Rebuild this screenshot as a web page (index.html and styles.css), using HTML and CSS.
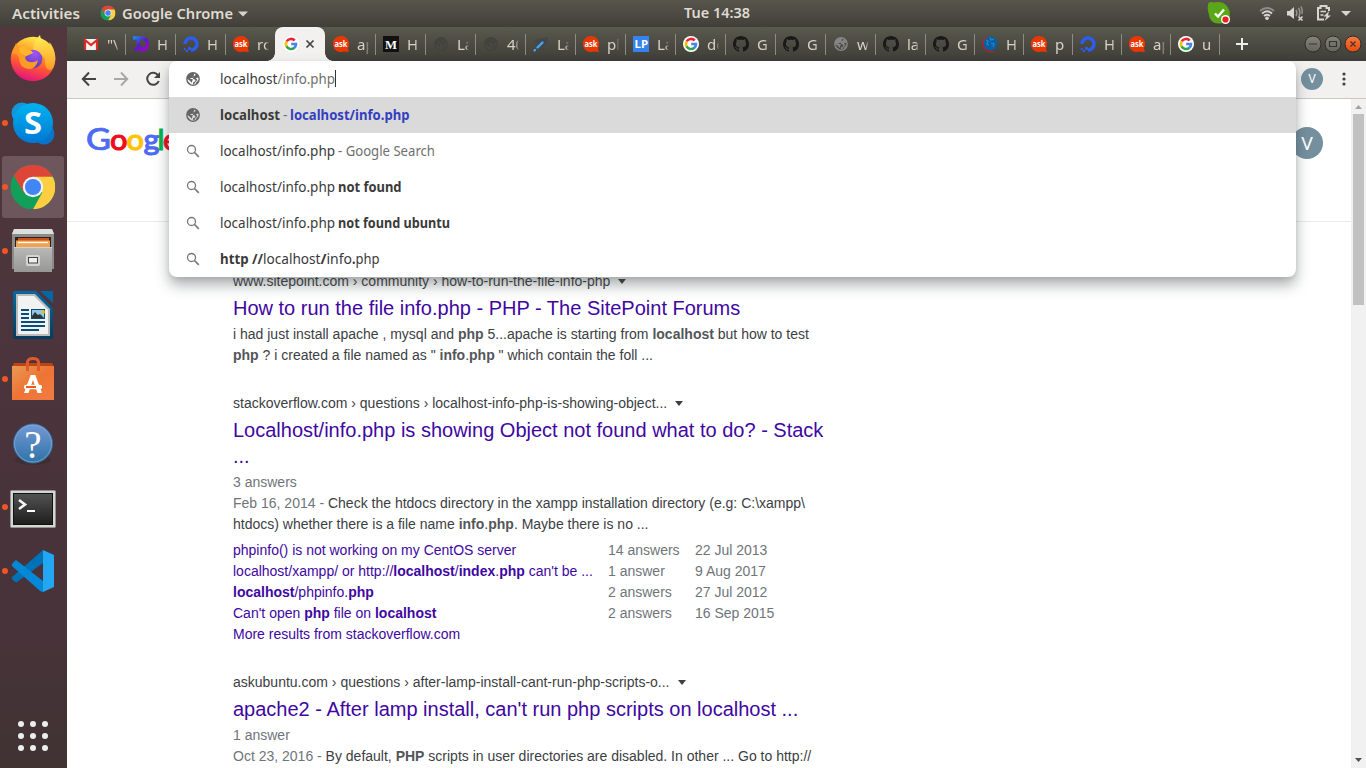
FILE: index.html
```html
<!DOCTYPE html>
<html lang="en">
<head>
<meta charset="utf-8">
<title>localhost/info.php - Google Search</title>
<link rel="stylesheet" href="styles.css">
</head>
<body>
<svg class="defs" width="0" height="0">
  <defs>
    <linearGradient id="gSky" x1="0" y1="0" x2="0" y2="1"><stop offset="0" stop-color="#00b4f0"/><stop offset="1" stop-color="#0078d4"/></linearGradient>
    <linearGradient id="gFox" x1=".7" y1="0" x2=".4" y2="1"><stop offset="0" stop-color="#fff44f"/><stop offset=".35" stop-color="#ffa52a"/><stop offset=".65" stop-color="#ff5634"/><stop offset="1" stop-color="#e3127e"/></linearGradient>
    <linearGradient id="gFox2" x1="0" y1="0" x2="0" y2="1"><stop offset="0" stop-color="#fff056"/><stop offset="1" stop-color="#ff9a26"/></linearGradient>
    <radialGradient id="gPur" cx=".6" cy=".2" r=".8"><stop offset="0" stop-color="#a252ff"/><stop offset="1" stop-color="#5b3fae"/></radialGradient>
    <linearGradient id="gGrey" x1="0" y1="0" x2="0" y2="1"><stop offset="0" stop-color="#b9b9b7"/><stop offset="1" stop-color="#979795"/></linearGradient>
    <linearGradient id="gWr" x1="0" y1="0" x2="0" y2="1"><stop offset="0" stop-color="#0369a3"/><stop offset="1" stop-color="#063b5c"/></linearGradient>
    <linearGradient id="gBag" x1="0" y1="0" x2="1" y2="1"><stop offset="0" stop-color="#e79a55"/><stop offset=".5" stop-color="#ee7434"/><stop offset="1" stop-color="#f07c44"/></linearGradient>
    <linearGradient id="gHelp" x1="0" y1="0" x2="0" y2="1"><stop offset="0" stop-color="#7399d6"/><stop offset="1" stop-color="#2f72a6"/></linearGradient>
    <linearGradient id="gTerm" x1="0" y1="0" x2="0" y2="1"><stop offset="0" stop-color="#535353"/><stop offset="1" stop-color="#1d1d1d"/></linearGradient>
    <linearGradient id="gJd" x1="0" y1="0" x2="1" y2="1"><stop offset="0" stop-color="#1a86ff"/><stop offset=".5" stop-color="#5a1bc4"/><stop offset="1" stop-color="#a800d0"/></linearGradient>
    <linearGradient id="gBtn" x1="0" y1="0" x2="0" y2="1"><stop offset="0" stop-color="#85847b"/><stop offset="1" stop-color="#65645c"/></linearGradient>
    <linearGradient id="gCls" x1="0" y1="0" x2="0" y2="1"><stop offset="0" stop-color="#f67a45"/><stop offset="1" stop-color="#ea4a08"/></linearGradient>
  </defs>
  <symbol id="chrome" viewBox="0 0 48 48">
    <circle cx="24" cy="24" r="24" fill="#129f5a"/>
    <path d="M24 24 3.2 12A24 24 0 0 1 44.800 12Z" fill="#dd4538"/>
    <path d="M24 13H45.300A24 24 0 0 1 24 48L34 30Z" fill="#ffce41"/>
    <path d="M3.200 12 14 31 24 24V13Z" fill="#dd4538"/>
    <path d="M3.200 12 14 30 27 35 24 48A24 24 0 0 1 3.200 12Z" fill="#129f5a"/>
    <circle cx="24" cy="24" r="11" fill="#f1f1f1"/><circle cx="24" cy="24" r="8.700" fill="#4285f4"/>
  </symbol>
  <symbol id="goog" viewBox="0 0 16 16">
    <circle cx="8" cy="8" r="8" fill="#fff"/>
    <g fill="none" stroke-width="2.600">
      <path d="M3.700 5.400A5 5 0 0 1 11.700 4.500" stroke="#ea2533"/>
      <path d="M3.700 5.400A5 5 0 0 0 3.700 10.600" stroke="#fbbc05"/>
      <path d="M3.600 10.400A5 5 0 0 0 11.400 11.700" stroke="#2aa64f"/>
      <path d="M8.200 8H13A5 5 0 0 1 11.300 11.800" stroke="#4285f4"/>
    </g>
  </symbol>
  <symbol id="ask" viewBox="0 0 16 16"><path d="M8 0A8 8 0 1 0 10.500 15.500L15.800 16 15 12A8 8 0 0 0 8 0Z" fill="#ea3700"/><text x="1.500" y="11" class="ask-t" textLength="13" lengthAdjust="spacingAndGlyphs">ask</text></symbol>
  <symbol id="gh" viewBox="0 0 16 16"><path fill="#191919" d="M8 0C3.580 0 0 3.580 0 8c0 3.540 2.290 6.530 5.470 7.590.4.070.55-.17.55-.38 0-.19-.01-.82-.01-1.490-2.010.37-2.530-.49-2.690-.94-.09-.23-.48-.94-.82-1.130-.28-.15-.68-.52-.01-.53.63-.01 1.080.58 1.230.82.72 1.210 1.870.87 2.330.66.070-.52.28-.87.51-1.070-1.780-.2-3.640-.89-3.640-3.950 0-.87.31-1.590.82-2.150-.08-.2-.36-1.020.08-2.120 0 0 .67-.21 2.200.82.64-.18 1.320-.27 2-.27s1.360.09 2 .27c1.530-1.040 2.200-.82 2.200-.82.44 1.100.16 1.920.08 2.120.51.56.82 1.270.82 2.150 0 3.070-1.870 3.750-3.650 3.950.29.25.54.73.54 1.480 0 1.070-.01 1.930-.01 2.200 0 .21.15.46.55.38A8.010 8.010 0 0 0 16 8c0-4.420-3.580-8-8-8Z"/></symbol>
  <symbol id="globe" viewBox="0 0 16 16"><circle cx="8" cy="8" r="6.900" fill="currentColor"/><path class="land" d="M9.200 2.700 10.500 3.200 10.200 4.400 8.600 5V6.300L7.400 7H5.500V8H9L10.300 9.200V10.300L8.200 11.200 7.800 13.300 6.600 13.200V11.500L5.300 10.300 2.600 8A5.500 5.500 0 0 0 3.200 10.600L5.600 13A5.700 5.700 0 0 0 10.500 13L11.500 11 13.300 9.200 13.500 7.200 12.200 6.500 11 7.500 12.500 9 11 10.500 9 13.300 6.500 13Z"/></symbol>
  <symbol id="ocean" viewBox="0 0 16 16"><path d="M2 8A6 6 0 1 1 8 14" fill="none" stroke="#2b5df0" stroke-width="3.400"/><path d="M5 11H8V14H5ZM2.700 14H5V16H2.700ZM.8 12H2.700V14H.8Z" fill="#2b5df0"/></symbol>
  <symbol id="search" viewBox="0 0 16 16"><circle cx="6.500" cy="6.500" r="4" fill="none" stroke="#777" stroke-width="1.300"/><path d="M9.500 9.500 13.800 13.800" stroke="#777" stroke-width="1.700"/></symbol>
</svg>

<header class="topbar">
  <svg class="top-l" width="260" height="27">
    <g class="ubu-b"><text x="12" y="18.500" textLength="68" lengthAdjust="spacingAndGlyphs">Activities</text>
    <text x="122" y="18.500" textLength="111" lengthAdjust="spacingAndGlyphs">Google Chrome</text></g>
    <use href="#chrome" x="100.500" y="5.500" width="15" height="15"/>
    <path d="M238 11.500H248L243 16.500Z" fill="#d5d3cf"/>
  </svg>
  <svg class="clock" width="68" height="27"><text class="ubu-b" x="1" y="18" textLength="66" lengthAdjust="spacingAndGlyphs">Tue 14:38</text></svg>
  <svg class="tray" width="166" height="27">
    <path d="M8 4Q9 1 14 2.500Q26 0 29.500 11Q30 14 29.500 17Q30 24 23 23Q10 26 8.500 13Q7 8 8 4Z" fill="#5aa818"/>
    <path d="M15 13.500 18 16.500 24 9.500" fill="none" stroke="#fff" stroke-width="2.400"/>
    <circle cx="25.500" cy="19.500" r="4.500" fill="#fff"/><circle cx="25.500" cy="19.500" r="3.100" fill="#ec2020"/>
    <g fill="none" stroke-width="1.800"><path d="M60 11Q67 5 74 11" stroke="#8d8b86"/><path d="M62 13.600Q67 9 72 13.600M64 16Q67 13.500 70 16" stroke="#d8d6d2"/></g><circle cx="67" cy="18.200" r="1.800" fill="#d8d6d2"/>
    <path d="M87 11H89.500L94 7V19L89.500 15.500H87Z" fill="#d8d6d2"/>
    <path d="M96 10Q98 13 96 16M98.500 8Q101 12 99 16M101 6.500Q103 10 102 14" fill="none" stroke="#96948f" stroke-width="1.500"/>
    <path d="M98.500 16.500 102.500 20.500M102.500 16.500 98.500 20.500" stroke="#d8d6d2" stroke-width="1.600"/>
    <path d="M124 19.500H118V8H120.500V6H126.500V8H129V11" fill="none" stroke="#d8d6d2" stroke-width="2"/><path d="M120.500 11.500H126M120.500 15H123.500" stroke="#d8d6d2" stroke-width="1.600"/><path d="M129 11 123.500 16.500H126.500L124.500 21 131 15.500H128Z" fill="#d8d6d2"/>
    <path d="M141 11H151L146 16Z" fill="#d8d6d2"/>
  </svg>
</header>

<div class="desk">
  <nav class="dock">
    <div class="app"><svg width="62" height="62">
      <circle cx="31" cy="31" r="22.300" fill="url(#gFox)"/>
      <path d="M31 22C31 16 35 10 38 7 39 14 43 15 46 20 48 17 47.500 15 47.500 14 54 22 55 33 51 40 46 46 42 38 43 31 39 25 35 22 31 22Z" fill="url(#gFox2)"/>
      <circle cx="31" cy="31" r="9.300" fill="url(#gPur)"/>
      <path d="M10 26 14 15 17 20Q20 17 24 16L23 21Q27 20 31 25L24 28Q22 30 25 33Q31 36 36 32Q34 41 27 41 17 40 17 30Q15 24 10 26Z" fill="#ff9b25"/>
      <path d="M17 20 24 16 23 21Q27 20 31 25L24 28 18 25Z" fill="#ffb52c"/>
    </svg></div>
    <div class="app run"><svg width="62" height="62"><circle cx="20" cy="21" r="10.500" fill="#1198dc"/><circle cx="42" cy="42" r="10.500" fill="#0873c8"/><circle cx="31" cy="31" r="20" fill="url(#gSky)"/><text x="22" y="42" class="skype" textLength="18" lengthAdjust="spacingAndGlyphs">S</text></svg></div>
    <div class="app run active"><svg width="62" height="62"><use href="#chrome" x="8.700" y="8.700" width="44.600" height="44.600"/></svg></div>
    <div class="app run"><svg width="62" height="62"><path d="M12 9H50L52 14V49H10V14Z" fill="#8b8b89"/><path d="M12 9H50L52 14H10Z" fill="#dededc"/><path d="M13 17H49V28H13Z" fill="#29221d"/><path d="M16 18H47V24H16Z" fill="#c9501c"/><path d="M14 20.500H48V28H14Z" fill="#f0a34e"/><path d="M16 22.500H46" stroke="#fff" stroke-width="1.300"/><path d="M12 27H50V52H12Z" fill="url(#gGrey)"/><path d="M12 27.500H50" stroke="#d2d2d0"/><rect x="24" y="35" width="14" height="11" rx="2" fill="#d4d4d2"/><rect x="26.500" y="37.500" width="9" height="5.500" fill="#eee" stroke="#444"/></svg></div>
    <div class="app"><svg width="62" height="62"><path d="M13 7H34L51 24V53Q51 55 49 55H13Q11 55 11 53V9Q11 7 13 7Z" fill="url(#gWr)"/><path d="M38 7H51V19Z" fill="#0668a2"/><path d="M14 10H33L48 25V52H14Z" fill="#bbb"/><path d="M16 12H32L46 26V50H16Z" fill="#f2f2f2"/><path d="M19 26H27M19 30H27M19 34H27M19 38H43M19 42H43M19 46H37" stroke="#084e7b" stroke-width="2"/><rect x="29.500" y="25.500" width="13" height="9" fill="#8dc8eb" stroke="#084e7b"/><circle cx="41" cy="28" r="2" fill="#d9c331"/><path d="M30 34V32L33 28 36 31 38 30 42 34Z" fill="#333"/></svg></div>
    <div class="app run"><svg width="62" height="62"><path d="M12 15H50L52 19H10Z" fill="#bd4415"/><path d="M10 18H52V52H10Z" fill="url(#gBag)"/><path d="M25.500 23V14Q26 10.500 31 10.500T36.500 14V23" fill="none" stroke="#de5a28" stroke-width="3"/><path d="M28.700 27H33.300L40 45H35.500L31 32 26.500 45H22Z" fill="#fff"/><rect x="22" y="36.700" width="18" height="4.600" rx="2" fill="#fff"/><path d="M24 39H34" stroke="#e95b1a" stroke-width="2"/></svg></div>
    <div class="app"><svg width="62" height="62"><ellipse cx="31" cy="48" rx="18" ry="5" fill="#402f32"/><circle cx="31" cy="31.500" r="19.500" fill="url(#gHelp)" stroke="#356b9c"/><circle cx="31" cy="31.500" r="18.500" fill="none" stroke="#86aedb" stroke-width=".7"/><text x="22.300" y="45.500" class="help">?</text></svg></div>
    <div class="app run"><svg width="62" height="62"><rect x="8.500" y="14.500" width="45" height="37" rx="1" fill="#d5d5d2" stroke="#929290"/><rect x="11.500" y="17.500" width="39" height="31" fill="url(#gTerm)" stroke="#111"/><path d="M17 24 23 28.500 17 33" fill="none" stroke="#f4f4f4" stroke-width="2.600"/><path d="M25 35H33" stroke="#fff" stroke-width="2"/></svg></div>
    <div class="app run"><svg width="62" height="62"><path d="M41 10V23L15 42Q13 43 10 39V37Z" fill="#0072b8"/><path d="M10 24 14 20 41 41V52Q39 52 37 50L10 26Z" fill="#0589d6"/><path d="M41 10 52 15V47L41 52Z" fill="#24a7f2"/></svg></div>
    <svg class="grid" width="62" height="62" fill="#eeeeec"><circle cx="19" cy="19" r="3"/><circle cx="31" cy="19" r="3"/><circle cx="43" cy="19" r="3"/><circle cx="19" cy="31" r="3"/><circle cx="31" cy="31" r="3"/><circle cx="43" cy="31" r="3"/><circle cx="19" cy="43" r="3"/><circle cx="31" cy="43" r="3"/><circle cx="43" cy="43" r="3"/></svg>
  </nav>

  <div class="window">
    <div class="tabs">
      <div class="tab"><svg class="fav" viewBox="0 0 16 16"><path d="M1 3H15V14H1Z" fill="#f2f2f2"/><path d="M2 14V4L8 9 14 4V14" fill="none" stroke="#dc2a25" stroke-width="2.200"/></svg><span>"\</span></div>
      <div class="tab"><svg class="fav" viewBox="0 0 16 16"><path d="M0 2H5.500V9.500Q5.500 13.500 1 13.500M7.500 2H9Q14.300 2.500 14.300 8T9 14H8V10" fill="none" stroke="url(#gJd)" stroke-width="3.300"/></svg><span>H</span></div>
      <div class="tab"><svg class="fav"><use href="#ocean"/></svg><span>H</span></div>
      <div class="tab last"><svg class="fav"><use href="#ask"/></svg><span>rc</span></div>
      <div class="tab current"><svg class="fav"><use href="#goog"/></svg><svg class="close" width="10" height="10"><path d="M1.500 1.500 8.500 8.500M8.500 1.500 1.500 8.500" stroke="#424242" stroke-width="1.700"/></svg></div>
      <div class="tab"><svg class="fav"><use href="#ask"/></svg><span>ap</span></div>
      <div class="tab"><svg class="fav" viewBox="0 0 16 16"><path d="M0 0H16V16H0Z" fill="#111"/><text x="2" y="12.500" class="med" textLength="12" lengthAdjust="spacingAndGlyphs">M</text></svg><span>H</span></div>
      <div class="tab"><svg class="fav faint"><use href="#globe"/></svg><span>La</span></div>
      <div class="tab"><svg class="fav faint"><use href="#globe"/></svg><span>40</span></div>
      <div class="tab"><svg class="fav" viewBox="0 0 16 16"><path d="M1 5Q8 2 15 1 15 9 9 14L7 12Z" fill="#42474a"/><path d="M1.500 14.500 2 14M4.500 11.500 9.500 6.500" stroke="#43a6f5" stroke-width="2.400" stroke-linecap="round"/></svg><span>La</span></div>
      <div class="tab"><svg class="fav"><use href="#ask"/></svg><span>pl</span></div>
      <div class="tab"><svg class="fav" viewBox="0 0 16 16"><path d="M0 0H16V16H0Z" fill="#3483ef"/><text x="1.500" y="12" class="lp" textLength="13.500" lengthAdjust="spacingAndGlyphs">LP</text></svg><span>La</span></div>
      <div class="tab"><svg class="fav"><use href="#goog"/></svg><span>dc</span></div>
      <div class="tab"><svg class="fav"><use href="#gh"/></svg><span>G</span></div>
      <div class="tab"><svg class="fav"><use href="#gh"/></svg><span>G</span></div>
      <div class="tab"><svg class="fav dim"><use href="#globe"/></svg><span>w</span></div>
      <div class="tab"><svg class="fav"><use href="#gh"/></svg><span>la</span></div>
      <div class="tab n"><svg class="fav"><use href="#gh"/></svg><span>G</span></div>
      <div class="tab n"><svg class="fav" viewBox="0 0 16 16"><circle cx="8.500" cy="7.500" r="6.900" fill="#075fa5"/><path d="M4 4 6 5 5 8 7 9M8 1.500 9 4 12 3M9 7 12 8 11 11" fill="none" stroke="#2b86c5" stroke-width="1.200"/><path d="M4 1.500A8 8 0 0 0 11.500 15.300" fill="none" stroke="#c51c26" stroke-width="1.300"/></svg><span>H</span></div>
      <div class="tab n"><svg class="fav"><use href="#ask"/></svg><span>p</span></div>
      <div class="tab n"><svg class="fav"><use href="#ocean"/></svg><span>H</span></div>
      <div class="tab n"><svg class="fav"><use href="#ask"/></svg><span>ap</span></div>
      <div class="tab n"><svg class="fav"><use href="#goog"/></svg><span>u</span></div>
      <svg class="plus" width="12" height="12"><path d="M6 0V12M0 6H12" stroke="#eeeee6" stroke-width="2"/></svg>
      <svg class="controls" width="60" height="20"><g stroke="#2e2d29"><circle cx="10" cy="10" r="8" fill="url(#gBtn)"/><circle cx="30" cy="10" r="8" fill="url(#gBtn)"/><circle cx="50" cy="10" r="8" fill="url(#gCls)"/></g><path d="M6 10H14M26.500 7.500H33.500V12.500H26.500ZM47.500 7.500 52.500 12.500M52.500 7.500 47.500 12.500" fill="none" stroke="#37352f" stroke-width="1.200"/></svg>
    </div>
    <div class="toolbar">
      <svg class="nav" width="78" height="36" fill="none" stroke-width="2"><path d="M29 18H16M22 11.500 15.800 18 22 24.500" stroke="#444"/><path d="M47 18H60M54 11.500 60.200 18 54 24.500" stroke="#a9a8a6"/></svg>
      <svg class="reload" width="16" height="16"><path d="M13.200 4.500A6 6 0 1 0 13.800 10" fill="none" stroke="#444" stroke-width="2"/><path d="M15 1V7H9Z" fill="#444"/></svg>
      <span class="me small">V</span>
      <svg class="menu" width="6" height="16" fill="#404040"><circle cx="3" cy="3" r="1.600"/><circle cx="3" cy="8" r="1.600"/><circle cx="3" cy="13" r="1.600"/></svg>
    </div>
    <div class="view">
      <main class="page">
        <div class="ghead">
          <svg class="logo" width="110" height="45"><g fill="#4d6bf3" stroke="#4d6bf3"><text x="-1" y="31" textLength="25" lengthAdjust="spacingAndGlyphs">G</text><text class="heavy" x="56.500" y="31" textLength="16" lengthAdjust="spacingAndGlyphs">g</text></g><text class="heavy" x="23" y="31" fill="#f00c1d" stroke="#f00c1d" textLength="17.500" lengthAdjust="spacingAndGlyphs">o</text><text class="heavy" x="39.500" y="31" fill="#ffc400" stroke="#ffc400" textLength="17.500" lengthAdjust="spacingAndGlyphs">o</text><text class="heavy" x="70.500" y="31" fill="#06b34f" stroke="#06b34f">l</text><text class="heavy" x="76" y="31" fill="#f00c1d" stroke="#f00c1d">e</text></svg>
          <span class="me">V</span>
        </div>
        <div class="results">
          <article>
            <cite>www.sitepoint.com › community › how-to-run-the-file-info-php<i></i></cite>
            <h3>How to run the file info.php - PHP - The SitePoint Forums</h3>
            <p>i had just install apache , mysql and <b>php</b> 5...apache is starting from <b>localhost</b> but how to test<br><b>php</b> ? i created a file named as " <b>info</b>.<b>php</b> " which contain the foll ...</p>
          </article>
          <article>
            <cite>stackoverflow.com › questions › localhost-info-php-is-showing-object...<i></i></cite>
            <h3>Localhost/info.php is showing Object not found what to do? - Stack<br>...</h3>
            <p><span class="g">3 answers</span><br><span class="g">Feb 16, 2014 - </span>Check the htdocs directory in the xampp installation directory (e.g: C:\xampp\<br>htdocs) whether there is a file name <b>info</b>.<b>php</b>. Maybe there is no ...</p>
            <div class="more">
              <a>phpinfo() is not working on my CentOS server</a><span>14 answers</span><span>22 Jul 2013</span>
              <a>localhost/xampp/ or http://<b>localhost</b>/<b>index</b>.<b>php</b> can't be ...</a><span>1 answer</span><span>9 Aug 2017</span>
              <a><b>localhost</b>/phpinfo.<b>php</b></a><span>2 answers</span><span>27 Jul 2012</span>
              <a>Can't open <b>php</b> file on <b>localhost</b></a><span>2 answers</span><span>16 Sep 2015</span>
              <a>More results from stackoverflow.com</a>
            </div>
          </article>
          <article>
            <cite>askubuntu.com › questions › after-lamp-install-cant-run-php-scripts-o...<i></i></cite>
            <h3>apache2 - After lamp install, can't run php scripts on localhost ...</h3>
            <p><span class="g">1 answer</span><br><span class="g">Oct 23, 2016 - </span>By default, <b>PHP</b> scripts in user directories are disabled. In other ... Go to http://</p>
          </article>
        </div>
      </main>
      <div class="scroll"><svg width="15" height="15"><path d="M4 10H11L7.500 6Z" fill="#a3a3a3"/></svg><div class="thumb"></div><svg width="15" height="15"><path d="M4 5H11L7.500 9Z" fill="#505050"/></svg></div>
    </div>

    <div class="omni">
      <div class="row"><svg class="ic"><use href="#globe"/></svg><svg class="tx"><text y="23" textLength="57.500" lengthAdjust="spacingAndGlyphs">localhost</text><text x="57.500" y="23" textLength="57.500" lengthAdjust="spacingAndGlyphs" class="lt">/info.php</text><path d="M115.500 9V26" stroke="#333"/></svg></div>
      <div class="row sel"><svg class="ic"><use href="#globe"/></svg><svg class="tx"><text class="bd" y="23" textLength="60" lengthAdjust="spacingAndGlyphs">localhost</text><text x="63" y="23" class="lt" textLength="4.500" lengthAdjust="spacingAndGlyphs">-</text><text x="70" y="23" class="bd url" textLength="119.500" lengthAdjust="spacingAndGlyphs">localhost/info.php</text></svg></div>
      <div class="row"><svg class="ic"><use href="#search"/></svg><svg class="tx"><text y="23" textLength="115" lengthAdjust="spacingAndGlyphs">localhost/info.php</text><text x="118" y="23" class="lt" textLength="97" lengthAdjust="spacingAndGlyphs">- Google Search</text></svg></div>
      <div class="row"><svg class="ic"><use href="#search"/></svg><svg class="tx"><text y="23" textLength="115" lengthAdjust="spacingAndGlyphs">localhost/info.php</text><text x="118" y="23" class="bd" textLength="63.500" lengthAdjust="spacingAndGlyphs">not found</text></svg></div>
      <div class="row"><svg class="ic"><use href="#search"/></svg><svg class="tx"><text y="23" textLength="115" lengthAdjust="spacingAndGlyphs">localhost/info.php</text><text x="118" y="23" class="bd" textLength="112" lengthAdjust="spacingAndGlyphs">not found ubuntu</text></svg></div>
      <div class="row"><svg class="ic"><use href="#search"/></svg><svg class="tx"><text y="23" class="bd" textLength="43" lengthAdjust="spacingAndGlyphs">http //</text><text x="43" y="23" textLength="57.500" lengthAdjust="spacingAndGlyphs">localhost</text><text x="100.500" y="23" class="bd" textLength="6" lengthAdjust="spacingAndGlyphs">/</text><text x="106.500" y="23" textLength="25.500" lengthAdjust="spacingAndGlyphs">info</text><text x="132" y="23" class="bd" textLength="3.500" lengthAdjust="spacingAndGlyphs">.</text><text x="135.500" y="23" textLength="24" lengthAdjust="spacingAndGlyphs">php</text></svg></div>
    </div>
  </div>
</div>
</body>
</html>
```

FILE: styles.css
```css
* { box-sizing: border-box; }
body { margin: 0; width: 1366px; height: 768px; overflow: hidden; font-family: "Liberation Sans", Arial, sans-serif; background: #fff; display: flex; flex-direction: column; }
svg { display: block; flex: none; }
.defs { position: absolute; }

.topbar { height: 27px; flex: none; display: grid; grid-template-columns: 683px 517px 166px; background: linear-gradient(#58554c, #413f39); }
.ubu-b { font: 600 14px "Noto Sans", sans-serif; fill: #dfdbd2; }

.desk { flex: 1; display: flex; min-height: 0; }
.dock { width: 67px; flex: none; padding: 1px 0 1px 2px; display: flex; flex-direction: column; gap: 2px; background: linear-gradient(#52383d, #4b343c 45%, #48333a 80%, #403332); }
.app { width: 62px; height: 62px; flex: none; border-radius: 3px; position: relative; }
.app.active { background: #6d575c; }
.app.run::before { content: ""; position: absolute; left: 0; top: 28px; width: 6px; height: 6px; border-radius: 50%; background: #ee5622; }
.grid { margin-top: auto; }
.skype { font: 700 31px "Open Sans", sans-serif; fill: #fff; }
.help { font: 400 39px "Liberation Serif", serif; fill: #fff; }

.window { flex: 1; min-width: 0; display: flex; flex-direction: column; position: relative; }
.tabs { height: 34px; flex: none; display: flex; padding-left: 8px; background: linear-gradient(#5a594d, #3e3d38); }
.tab { width: 50px; flex: none; display: flex; align-items: center; padding-left: 8px; position: relative; --land: #4c4b43; }
.tab.n { width: 49px; }
.tab::after { content: ""; position: absolute; right: -1px; top: 7px; width: 1px; height: 21px; background: #8d8b82; }
.tab.last::after, .tab.current::after { display: none; }
.fav { width: 16px; height: 16px; overflow: visible; }
.tab span { margin: -1px 0 0 8px; width: 12px; overflow: hidden; white-space: nowrap; font: 15px "Noto Sans", sans-serif; color: #d5d3c5; -webkit-mask-image: linear-gradient(90deg, #000 70%, transparent); mask-image: linear-gradient(90deg, #000 70%, transparent); }
.tab.current { background: #f2f1f0; border-radius: 8px 8px 0 0; }
.tab.current::before { content: ""; position: absolute; left: -8px; right: -8px; bottom: 0; height: 8px; background: radial-gradient(circle at 0 0, transparent 7.5px, #f2f1f0 8px) left / 8px 8px no-repeat, radial-gradient(circle at 100% 0, transparent 7.5px, #f2f1f0 8px) right / 8px 8px no-repeat; }
.close { margin-left: 6px; }
.ask-t { font: 700 8.5px "Noto Sans", sans-serif; fill: #fff; }
.med { font: 700 13px "Liberation Serif", serif; fill: #fff; }
.lp { font: 700 11px "Noto Sans", sans-serif; fill: #fff; }
.dim { color: #858585; }
.faint { color: #42433e; }
.plus { margin: 11px 0 0 17px; }
.controls { margin: 7px 3px 0 auto; }

.toolbar { height: 38px; flex: none; display: flex; align-items: center; padding-bottom: 1px; background: #f2f1f0; border-bottom: 1px solid #c9c8c7; }
.me { width: 32px; height: 32px; border-radius: 50%; background: #748f9d; color: #fff; font: 400 19px Roboto, sans-serif; display: flex; align-items: center; justify-content: center; flex: none; }
.me.small { width: 22px; height: 22px; font-size: 12px; margin-left: auto; }
.menu { margin: 0 19px 0 18px; }

.view { flex: 1; display: flex; min-height: 0; }
.page { flex: 1; min-width: 0; overflow: hidden; }
.ghead { height: 123px; border-bottom: 1px solid #ebebeb; padding: 20px 28px 0 20px; display: flex; justify-content: space-between; }
.ghead .me { margin-top: 8px; }
.logo text { font: 500 31px Lato, sans-serif; stroke-width: .7px; }
.logo .heavy { font-size: 29px; stroke-width: 1px; }
.results { padding: 49px 0 0 166px; white-space: nowrap; color: #3c4043; font-size: 14px; }
article { margin-bottom: 27px; }
cite { display: block; font-style: normal; line-height: 20px; height: 20px; }
cite i { display: inline-block; margin-left: 8px; vertical-align: 2px; border: 4px solid transparent; border-top: 5px solid #3c4043; border-bottom: 0; }
h3 { margin: 4px 0 3px; font-size: 20px; font-weight: 400; line-height: 26px; color: #4007a2; }
p { margin: 0; line-height: 21px; }
p b { color: #52565a; }
.g { color: #70757a; }
.more { margin-top: 5px; display: grid; grid-template-columns: 375px 87px auto; line-height: 21px; color: #70757a; }
.more a { color: #4007a2; }

.scroll { width: 15px; flex: none; background: #f1f1f1; display: flex; flex-direction: column; }
.scroll .thumb { margin: 0 2px auto; height: 191px; background: #c1c1c1; }

.omni { position: absolute; left: 102px; top: 34px; width: 1127px; height: 216px; background: #fff; border-radius: 8px; box-shadow: 0 8px 14px rgba(60,66,70,.42), 0 2px 4px rgba(0,0,0,.08); overflow: hidden; }
.row { height: 36px; display: flex; align-items: center; padding-left: 16px; color: #666; }
.row.sel { background: #dadada; --land: #dadada; }
.ic { width: 16px; height: 16px; }
.tx { width: 600px; height: 36px; margin-left: 19px; font: 14.500px "Noto Sans", sans-serif; fill: #3a3a3a; }
.lt { fill: #6f6f6f; }
.bd { font-weight: 700; }
.url { fill: #343fc0; }
.land { fill: var(--land, #fff); }
```
